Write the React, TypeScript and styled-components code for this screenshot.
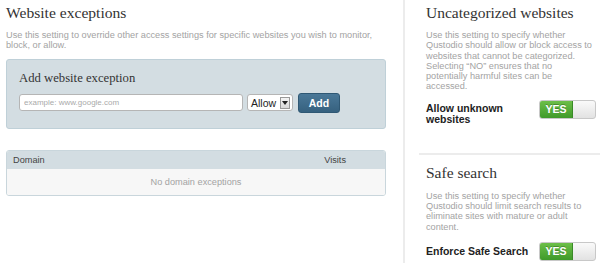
import React from "react";
import styled, { createGlobalStyle } from "styled-components";

const Global = createGlobalStyle`
  html, body { margin: 0; padding: 0; background: #fff; }
  body { font-family: "Liberation Sans", Arial, sans-serif; color: #333; }
  * { box-sizing: border-box; }
`;

const Page = styled.div`
  display: flex;
  width: 600px;
  height: 263px;
  overflow: hidden;
`;

const Main = styled.div`
  width: 403px;
  flex-shrink: 0;
  padding: 3px 17px 0 6px;
`;

const Sidebar = styled.div`
  flex: 1;
  min-width: 0;
  border-left: 2px solid #ececec;
  padding-left: 14px;
`;

const Title = styled.h1`
  font-family: "Liberation Serif", "DejaVu Serif", serif;
  font-weight: normal;
  font-size: 15.6px;
  line-height: 20px;
  margin: 0;
  color: #333;
  white-space: nowrap;
`;

const SideTitle = styled(Title)`
  font-size: 15.5px;
`;

const Desc = styled.p<{ $top?: number }>`
  margin: ${(p) => p.$top ?? 5}px 0 0;
  font-size: 9.2px;
  line-height: 10.3px;
  color: #a3a3a3;
  white-space: nowrap;
`;

const AddBox = styled.div`
  margin-top: 8px;
  background: #d3dde2;
  border: 1px solid #bfd0d8;
  border-radius: 3px;
  padding: 9px 12px 15px;
`;

const BoxTitle = styled.h2`
  font-family: "Liberation Serif", "DejaVu Serif", serif;
  font-weight: normal;
  font-size: 12.7px;
  line-height: 18px;
  margin: 0 0 6px;
  color: #333;
`;

const FormRow = styled.div`
  display: flex;
  align-items: center;
  gap: 4px;
`;

const Input = styled.input`
  width: 224px;
  height: 17px;
  border: 1px solid #b5b5b5;
  border-radius: 3px;
  padding: 0 4px;
  font-family: "Liberation Sans", Arial, sans-serif;
  font-size: 8px;
  color: #333;
  background: #fff;
  &::placeholder { color: #aaa; }
`;

const Select = styled.div`
  display: flex;
  align-items: center;
  justify-content: space-between;
  width: 46px;
  height: 17px;
  border: 1px solid #b5b5b5;
  border-radius: 3px;
  background: #fff;
  padding: 0 2px 0 3px;
  font-size: 10.5px;
  color: #222;
`;

const Arrow = styled.span`
  display: flex;
  align-items: center;
  justify-content: center;
  width: 10px;
  height: 12px;
  border: 1px solid #999;
  background: linear-gradient(#f4f4f4, #d8d8d8);
`;

const AddButton = styled.button`
  margin-left: 1px;
  width: 42px;
  height: 20px;
  border: 1px solid #2f5874;
  border-radius: 3px;
  background: linear-gradient(#4a7898, #36617f);
  color: #fff;
  font-family: "Liberation Sans", Arial, sans-serif;
  font-weight: bold;
  font-size: 10.5px;
  padding: 0;
`;

const Table = styled.div`
  margin-top: 21px;
  border: 1px solid #c9d6dc;
  border-radius: 3px;
  overflow: hidden;
`;

const HeadRow = styled.div`
  display: flex;
  justify-content: space-between;
  align-items: center;
  height: 18px;
  background: #d3dde2;
  padding: 0 39px 0 6px;
  font-size: 9.2px;
  color: #444;
`;

const EmptyRow = styled.div`
  height: 26px;
  display: flex;
  align-items: center;
  justify-content: center;
  background: #f7f7f7;
  font-size: 9.2px;
  color: #a3a3a3;
`;

const Section = styled.div<{ $sep?: boolean }>`
  padding: ${(p) => (p.$sep ? "8px 4px 0 7px" : "3px 4px 0 7px")};
  border-top: ${(p) => (p.$sep ? "2px solid #ececec" : "none")};
`;

const SettingRow = styled.div<{ $top: number; $bottom: number }>`
  display: flex;
  justify-content: space-between;
  align-items: flex-start;
  margin-top: ${(p) => p.$top}px;
  margin-bottom: ${(p) => p.$bottom}px;
`;

const Label = styled.div<{ $top: number; $wide?: boolean }>`
  font-weight: bold;
  font-size: 10.5px;
  line-height: 11px;
  color: #222;
  width: ${(p) => (p.$wide ? "auto" : "100px")};
  margin-top: ${(p) => p.$top}px;
  white-space: ${(p) => (p.$wide ? "nowrap" : "normal")};
`;

const Toggle = styled.div`
  display: flex;
  width: 57px;
  height: 19px;
  border: 1px solid #c8c8c8;
  border-radius: 3px;
  background: linear-gradient(#fafafa, #e2e2e2);
  overflow: hidden;
  flex-shrink: 0;
`;

const ToggleOn = styled.div`
  width: 33px;
  height: 100%;
  background: linear-gradient(#6cbf48, #3f9a2a);
  color: #fff;
  font-weight: bold;
  font-size: 10.5px;
  display: flex;
  align-items: center;
  justify-content: center;
  border-right: 1px solid #3a8a28;
  text-shadow: 0 -1px 0 rgba(0,0,0,0.25);
`;

const Switch = () => (
  <Toggle>
    <ToggleOn>YES</ToggleOn>
  </Toggle>
);

export default function App() {
  return (
    <>
      <Global />
      <Page>
        <Main>
          <Title>Website exceptions</Title>
          <Desc $top={7}>
            Use this setting to override other access settings for specific websites you wish to monitor,
            <br />
            block, or allow.
          </Desc>
          <AddBox>
            <BoxTitle>Add website exception</BoxTitle>
            <FormRow>
              <Input placeholder="example: www.google.com" />
              <Select>
                Allow
                <Arrow>
                  <svg width="6" height="4" viewBox="0 0 6 4">
                    <path d="M0 0H6L3 4Z" fill="#222" />
                  </svg>
                </Arrow>
              </Select>
              <AddButton>Add</AddButton>
            </FormRow>
          </AddBox>
          <Table>
            <HeadRow>
              <span>Domain</span>
              <span>Visits</span>
            </HeadRow>
            <EmptyRow>No domain exceptions</EmptyRow>
          </Table>
        </Main>
        <Sidebar>
          <Section>
            <SideTitle>Uncategorized websites</SideTitle>
            <Desc $top={7}>
              Use this setting to specify whether
              <br />
              Qustodio should allow or block access to
              <br />
              websites that cannot be categorized.
              <br />
              Selecting “NO” ensures that no
              <br />
              potentially harmful sites can be
              <br />
              accessed.
            </Desc>
            <SettingRow $top={8} $bottom={28}>
              <Label $top={3}>Allow unknown websites</Label>
              <Switch />
            </SettingRow>
          </Section>
          <Section $sep>
            <SideTitle>Safe search</SideTitle>
            <Desc $top={8}>
              Use this setting to specify whether
              <br />
              Qustodio should limit search results to
              <br />
              eliminate sites with mature or adult
              <br />
              content.
            </Desc>
            <SettingRow $top={10} $bottom={10}>
              <Label $top={4} $wide>Enforce Safe Search</Label>
              <Switch />
            </SettingRow>
          </Section>
        </Sidebar>
      </Page>
    </>
  );
}
